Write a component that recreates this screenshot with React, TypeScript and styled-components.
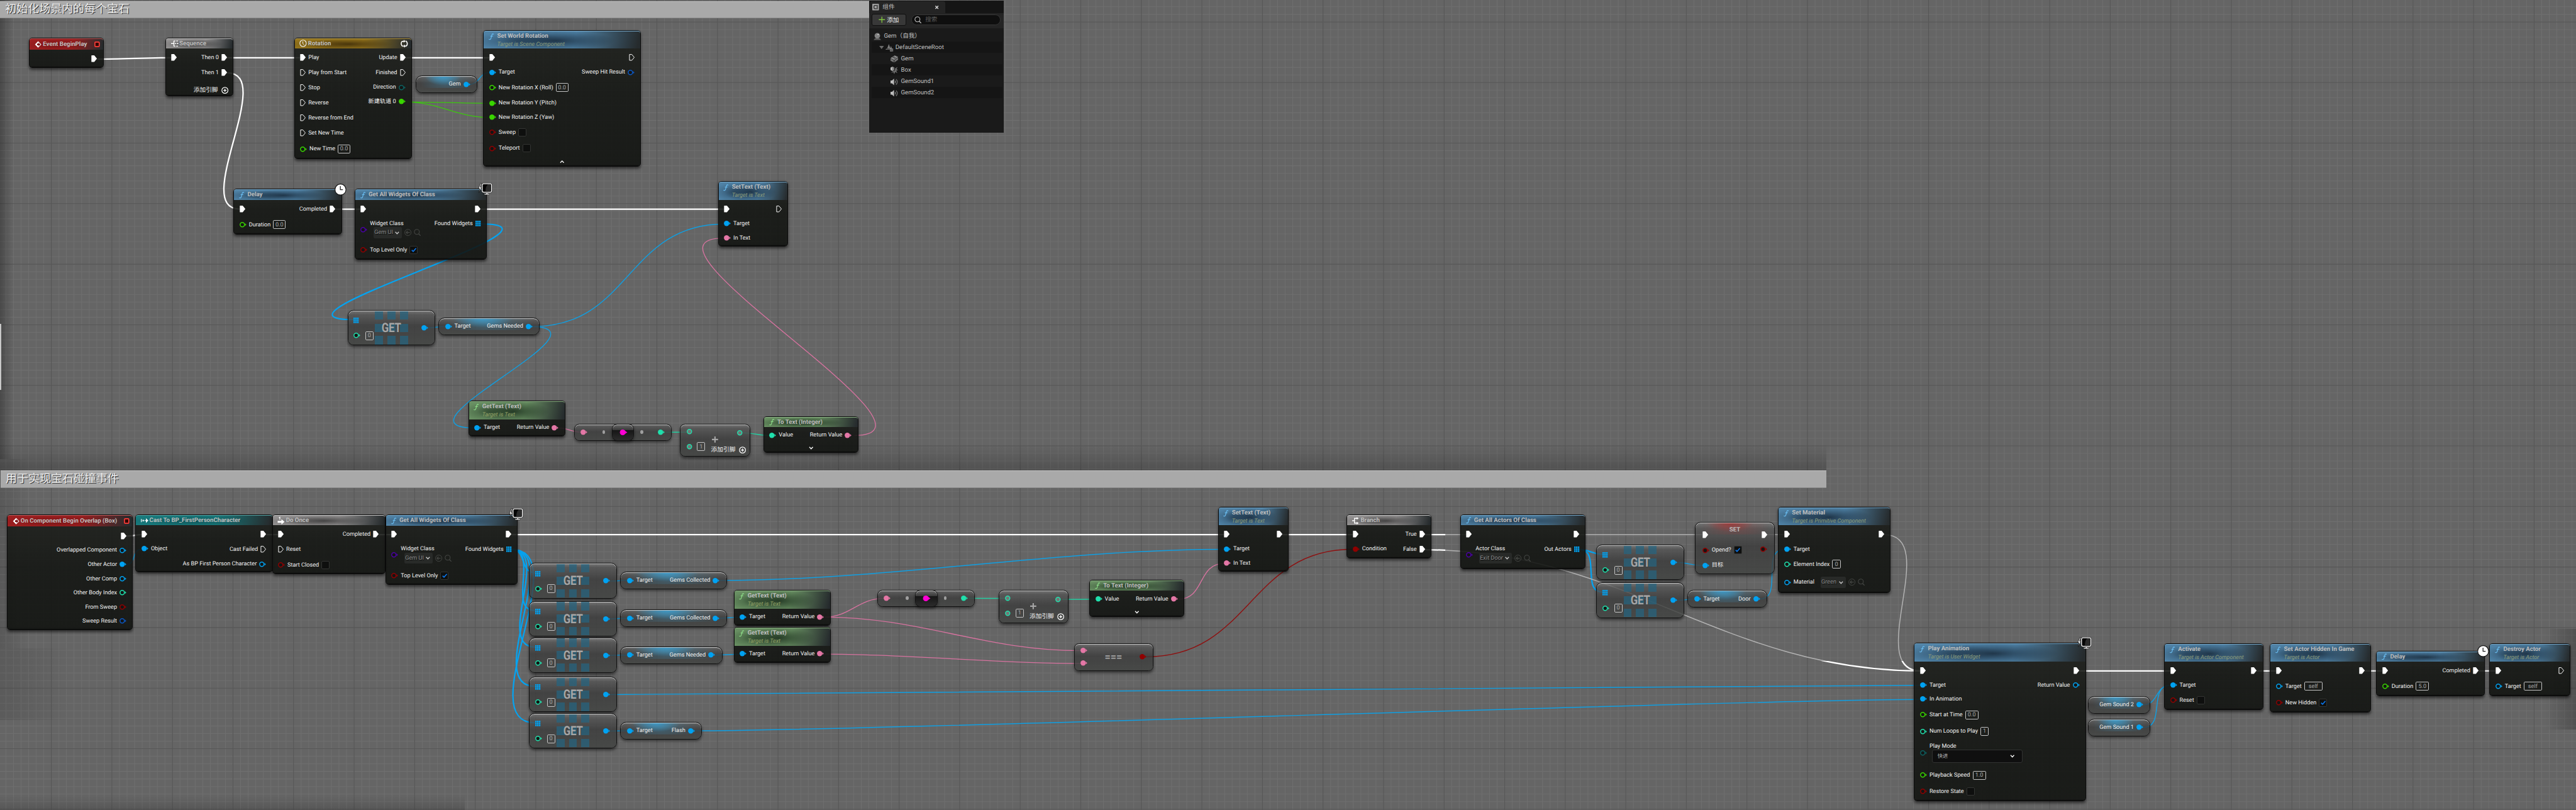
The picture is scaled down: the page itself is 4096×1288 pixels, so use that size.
import React from "react";
import styled, { createGlobalStyle, css } from "styled-components";

/* ---------- units ---------- */

const WORLD_W = 5445;
const WORLD_H = 1712;
const SCALE = 4096 / WORLD_W;
const u = (n: number) => `${+(n * SCALE).toFixed(3)}px`;

/* ---------- palette ---------- */

const C = {
  object: "#00a2f2",
  float: "#39d500",
  int: "#20e0ac",
  bool: "#900000",
  text: "#e477a6",
  struct: "#0b57c4",
  klass: "#4c00a8",
  enum: "#0d6060",
  name: "#ff00d4",
};

const Global = createGlobalStyle`
  html, body { margin: 0; padding: 0; background: #656565; }
  body { overflow: hidden; }
  * { box-sizing: border-box; }
`;

/* ---------- canvas ---------- */

const Canvas = styled.main`
  position: relative;
  width: 4096px;
  height: 1288px;
  overflow: hidden;
  background: #656565;
  color: #f2f2f2;
  font-family: Roboto, "Noto Sans CJK SC", sans-serif;
  font-size: ${u(12.2)};
  line-height: 1;
  white-space: nowrap;
  text-rendering: geometricPrecision;
`;

const Layer = styled.svg`
  position: absolute;
  inset: 0;
  width: 100%;
  height: 100%;
  display: block;
`;

const Shade = styled.div<{ $x: number; $y: number; $w: number; $h: number; $dir: string; $a: number }>`
  position: absolute;
  left: ${(p) => u(p.$x)};
  top: ${(p) => u(p.$y)};
  width: ${(p) => u(p.$w)};
  height: ${(p) => u(p.$h)};
  background: linear-gradient(${(p) => p.$dir}, rgba(0, 0, 0, ${(p) => p.$a}), transparent);
`;

type Box = { x: number; y: number; w: number; h: number };

const Placed = styled.div<{ $b: Box }>`
  position: absolute;
  left: ${(p) => u(p.$b.x)};
  top: ${(p) => u(p.$b.y)};
  width: ${(p) => u(p.$b.w)};
  height: ${(p) => u(p.$b.h)};
`;

const EdgeLine = styled(Placed)`
  background: #c8c8c8;
`;

const CommentBar = styled(Placed)`
  display: flex;
  align-items: center;
  padding-left: ${u(11)};
  background: #a9a9a9;
  border-top: ${u(1.4)} solid #c2c2c2;
  border-bottom: ${u(1)} solid #8c8c8c;
  font-size: ${u(23.9)};
  color: #ececec;
  text-shadow: ${u(1.6)} ${u(1.6)} 0 #3c3c3c;
`;

/* ---------- node shells ---------- */

type Tone = "func" | "pure" | "event" | "flow" | "cast" | "timeline";

const TONES: Record<Tone, { main: string; dark: string; soft: string; edge: string; sub: string; icon: string }> = {
  func: { main: "#4f82a6", dark: "rgba(22,38,54,.8)", soft: "rgba(22,38,54,.5)", edge: "#77a9cb", sub: "#8d9d7b", icon: "#6cc0f5" },
  pure: { main: "#688f62", dark: "rgba(24,42,26,.8)", soft: "rgba(24,42,26,.5)", edge: "#8bb184", sub: "#93a266", icon: "#8fe08a" },
  event: { main: "#9e1f20", dark: "rgba(95,12,14,.5)", soft: "rgba(95,12,14,.3)", edge: "#c06060", sub: "#aaa", icon: "#fff" },
  flow: { main: "#949292", dark: "rgba(38,38,38,.7)", soft: "rgba(38,38,38,.3)", edge: "#c8c8c8", sub: "#aaa", icon: "#fff" },
  cast: { main: "#187c7e", dark: "rgba(10,66,70,.7)", soft: "rgba(10,66,70,.3)", edge: "#58a5a6", sub: "#aaa", icon: "#fff" },
  timeline: { main: "#96761d", dark: "rgba(62,44,8,.85)", soft: "rgba(62,44,8,.4)", edge: "#bfa352", sub: "#aaa", icon: "#fff" },
};

const NodeBox = styled(Placed)`
  display: flex;
  flex-direction: column;
  border: ${u(1.8)} solid #0b0b0b;
  border-radius: ${u(6.5)};
  background: linear-gradient(rgba(28, 30, 26, 0.89), rgba(19, 21, 18, 0.89) 45%, rgba(16, 18, 15, 0.89));
  background-clip: padding-box;
  box-shadow: 0 ${u(3)} ${u(6)} rgba(0, 0, 0, 0.55), inset 0 ${u(-1.5)} 0 rgba(0, 0, 0, 0.45);
`;

const Header = styled.header<{ $tone: Tone; $h: number }>`
  display: flex;
  flex: none;
  height: ${(p) => u(p.$h - 1.8)};
  padding-left: ${u(10.5)};
  padding-right: ${u(6)};
  border-radius: ${u(5)} ${u(5)} 0 0;
  border-top: ${u(1.2)} solid ${(p) => TONES[p.$tone].edge};
  background: radial-gradient(ellipse 38% 58% at 46% 54%, ${(p) => TONES[p.$tone].dark}, transparent),
    radial-gradient(ellipse 30% 54% at 22% 56%, ${(p) => TONES[p.$tone].soft}, transparent),
    linear-gradient(102deg, ${(p) => TONES[p.$tone].main} 58%, #262b2d 98%);
`;

const IconSlot = styled.span<{ $h: number }>`
  display: flex;
  flex: none;
  align-items: center;
  width: ${u(17.6)};
  height: ${(p) => u(p.$h)};
`;

const CornerSlot = styled(IconSlot)`
  width: auto;
`;

const Titles = styled.div`
  display: flex;
  flex: 1;
  flex-direction: column;
`;

const Title = styled.div<{ $h: number }>`
  height: ${(p) => u(p.$h)};
  line-height: ${(p) => u(p.$h)};
  font-size: ${u(12.85)};
  font-weight: 700;
  color: #bfbfbf;
`;

const SubTitle = styled.div<{ $tone: Tone }>`
  height: ${u(14)};
  line-height: ${u(16)};
  font-size: ${u(12)};
  font-style: italic;
  color: ${(p) => TONES[p.$tone].sub};
`;

const Body = styled.div`
  position: relative;
  display: flex;
  flex: 1;
  justify-content: space-between;
`;

const PinColumn = styled.div<{ $side: "l" | "r" }>`
  display: flex;
  flex-direction: column;
  ${(p) =>
    p.$side === "l"
      ? css`
          align-items: flex-start;
          padding-left: ${u(11.3)};
        `
      : css`
          align-items: flex-end;
          padding-right: ${u(12.4)};
        `}
`;

const PIN_H = 10;

const PinRow = styled.div<{ $gap: number; $side: "l" | "r" }>`
  display: flex;
  flex: none;
  flex-direction: ${(p) => (p.$side === "l" ? "row" : "row-reverse")};
  align-items: center;
  gap: ${u(5.4)};
  height: ${u(PIN_H)};
  margin-top: ${(p) => u(p.$gap)};
`;

const Stack = styled.span`
  display: flex;
  flex-direction: column;
  padding-bottom: ${u(1.6)};
`;

const StackLabel = styled.span`
  height: ${u(15)};
  line-height: ${u(15)};
`;

const ValueBox = styled.span<{ $w: number; $pull?: number }>`
  display: flex;
  flex: none;
  align-items: center;
  justify-content: center;
  width: ${(p) => u(p.$w)};
  height: ${u(18.6)};
  margin-left: ${(p) => u(-(p.$pull ?? 0))};
  border: ${u(1.3)} solid #c4c4c4;
  border-radius: ${u(2.4)};
  color: #a9a9a9;
`;

const CheckBox = styled.span`
  display: flex;
  flex: none;
  align-items: center;
  justify-content: center;
  width: ${u(17.4)};
  height: ${u(17.4)};
  border: ${u(1)} solid #333432;
  border-radius: ${u(2.6)};
  background: #0e0f0e;
`;

const PickerRow = styled.span`
  display: flex;
  align-items: center;
  gap: ${u(5)};
  margin-left: ${u(7.2)};
  height: ${u(23.6)};
`;

const Picker = styled.span<{ $w: number }>`
  display: flex;
  align-items: center;
  justify-content: space-between;
  width: ${(p) => u(p.$w)};
  height: ${u(23.6)};
  padding: 0 ${u(5.6)} 0 ${u(2)};
  border-radius: ${u(3.4)};
  background: #282a28;
  color: #8f8f8f;
  text-shadow: ${u(1)} ${u(1)} 0 #000;
`;

const Select = styled.span`
  display: flex;
  align-items: center;
  justify-content: space-between;
  width: ${u(191.4)};
  height: ${u(27.4)};
  margin-left: ${u(5)};
  padding: 0 ${u(15)} 0 ${u(10.6)};
  border: ${u(1)} solid #313231;
  border-radius: ${u(4)};
  background: #0f0f0f;
  font-size: ${u(11)};
  color: #b5b5b5;
`;

const Expander = styled.div`
  position: absolute;
  left: 0;
  right: 0;
  bottom: ${u(6)};
  display: flex;
  justify-content: center;
`;

const AddPin = styled.div<{ $right: number; $bottom: number }>`
  position: absolute;
  right: ${(p) => u(p.$right)};
  bottom: ${(p) => u(p.$bottom)};
  display: flex;
  align-items: center;
  gap: ${u(7.6)};
  height: ${u(15)};
  font-size: ${u(12.9)};
`;

const Badge = styled.div<{ $x: number; $y: number }>`
  position: absolute;
  left: ${(p) => u(p.$x)};
  top: ${(p) => u(p.$y)};
  display: flex;
`;

/* ---------- compact nodes ---------- */

const SoftBox = styled(Placed)<{ $r: number; $glow?: string }>`
  display: flex;
  align-items: center;
  justify-content: space-between;
  border: ${u(1.6)} solid #121212;
  border-bottom-width: ${u(2.4)};
  border-radius: ${(p) => u(p.$r)};
  background: ${(p) =>
      p.$glow
        ? `radial-gradient(ellipse 30% ${u(20)} at 44% 0, ${p.$glow}, transparent) no-repeat, radial-gradient(ellipse 44% ${u(34)} at 50% ${u(10)}, ${p.$glow}55, transparent) 0 0 / 100% ${u(25)} no-repeat,`
        : ""}
    linear-gradient(rgba(122, 122, 122, 0.8), rgba(84, 84, 84, 0.8) 12%, rgba(58, 58, 58, 0.8) 46%, rgba(64, 66, 64, 0.82));
  background-clip: padding-box;
  box-shadow: 0 ${u(3)} ${u(6)} rgba(0, 0, 0, 0.5), inset 0 ${u(1.4)} ${u(0.8)} rgba(225, 225, 225, 0.75);
`;

const Pill = styled(SoftBox)`
  padding: 0 ${u(14)} 0 ${u(13)};
`;

const PillPin = styled.span<{ $rev?: boolean }>`
  display: flex;
  flex-direction: ${(p) => (p.$rev ? "row-reverse" : "row")};
  align-items: center;
  gap: ${u(5.2)};
  margin-left: ${(p) => (p.$rev ? "auto" : "0")};
`;

const GetBox = styled(SoftBox)`
  padding: 0 ${u(12.6)} 0 ${u(11.6)};
`;

const GetInputs = styled.div`
  display: flex;
  flex-direction: column;
  gap: ${u(13.4)};
  padding-top: ${u(1)};
`;

const GetInput = styled.div`
  display: flex;
  align-items: center;
  gap: ${u(10)};
  height: ${u(18.6)};
`;

const Tiles = styled.div`
  position: absolute;
  left: ${u(56)};
  top: ${u(1)};
  display: grid;
  grid-template: repeat(3, ${u(17.6)}) / repeat(3, ${u(17.2)});
  gap: ${u(8.7)} ${u(9.3)};
`;

const Tile = styled.i`
  background: rgba(38, 100, 128, 0.72);
`;

const GetCaption = styled.div`
  position: absolute;
  left: ${u(56)};
  top: 0;
  width: ${u(70)};
  height: ${u(72)};
  display: flex;
  align-items: center;
  justify-content: center;
  font-size: ${u(27)};
  font-weight: 700;
  color: #a6a6a6;
  transform: scaleX(0.82);
`;

const Knot = styled(Pill)`
  padding: 0 ${u(14)} 0 ${u(11.6)};
`;

const KnotDot = styled.i<{ $x: number }>`
  position: absolute;
  left: ${(p) => u(p.$x)};
  top: ${u(13)};
  width: ${u(5.6)};
  height: ${u(7)};
  border-radius: 50%;
  background: #a0a0a0;
`;

const KnotCore = styled(SoftBox)`
  justify-content: center;
  padding-left: ${u(2)};
  background: linear-gradient(#6a6a6a, #3a3a3a 34%, #161616 36%, #2c2c2c);
`;

const OpBox = styled(SoftBox)`
  align-items: stretch;
  padding: 0 ${u(13)} 0 ${u(13)};
`;

const OpColumn = styled.div<{ $top: number; $gap: number; $pull?: number }>`
  display: flex;
  flex-direction: column;
  gap: ${(p) => u(p.$gap)};
  padding-top: ${(p) => u(p.$top)};
  margin-right: ${(p) => u(-(p.$pull ?? 0))};
`;

const OpRow = styled.div`
  display: flex;
  align-items: center;
  gap: ${u(11)};
  height: ${u(12)};
`;

const Operator = styled.div<{ $x: number; $y: number; $size: number }>`
  position: absolute;
  left: ${(p) => u(p.$x)};
  top: ${(p) => u(p.$y)};
  display: flex;
  font-size: ${(p) => u(p.$size)};
  font-weight: 700;
  line-height: 1;
  color: #a6a6a6;
`;

const SetCaption = styled.div`
  position: absolute;
  left: 0;
  right: 0;
  top: ${u(9)};
  text-align: center;
  font-size: ${u(12.85)};
  font-weight: 700;
  color: #bfbfbf;
`;

const SetBody = styled(SoftBox)`
  align-items: flex-start;
  padding: 0 ${u(2.4)} 0 ${u(3.2)};
`;

/* ---------- icons ---------- */

const IconSvg = styled.svg`
  flex: none;
  overflow: visible;
`;

const Svg = ({ w, h, vb, children }: { w: number; h: number; vb?: string; children: React.ReactNode }) => (
  <IconSvg width={w * SCALE} height={h * SCALE} viewBox={vb ?? `0 0 ${w} ${h}`} fill="none">
    {children}
  </IconSvg>
);

const ExecGlyph = ({ open }: { open?: boolean }) => (
  <Svg w={12} h={14}>
    <path
      d="M1.2 .8H6.2L11.3 7 6.2 13.2H1.2Z"
      fill={open ? "none" : "#fff"}
      stroke="#fff"
      strokeWidth={open ? 1.3 : 1.4}
      strokeLinejoin="round"
    />
  </Svg>
);

const DataGlyph = ({ color, filled, bare }: { color: string; filled?: boolean; bare?: boolean }) => (
  <Svg w={14.6} h={11.4}>
    <circle cx="5.7" cy="5.7" r={filled ? 5.6 : 4.6} fill={filled ? color : bare ? "#757575" : "#141514"} stroke={filled ? "none" : color} strokeWidth="2" />
    {!bare && <path d="M11.4 2.8 14.4 5.7 11.4 8.6Z" fill={color} />}
  </Svg>
);

const ArrayGlyph = ({ color }: { color: string }) => (
  <Svg w={11} h={11.6}>
    {[0, 1, 2].map((r) =>
      [0, 1, 2].map((c) => <rect key={`${r}${c}`} x={c * 3.9} y={r * 4.1} width="3.2" height="3.4" fill={color} />)
    )}
  </Svg>
);

const Chevron = ({ up, w = 9 }: { up?: boolean; w?: number }) => (
  <Svg w={w} h={6} vb="0 0 9 6">
    <path d={up ? "M.8 5 4.5 1.2 8.2 5" : "M.8 1 4.5 4.9 8.2 1"} stroke={w > 9 ? "#fff" : "#c8c8c8"} strokeWidth="1.8" />
  </Svg>
);

const Tick = () => (
  <Svg w={11} h={9}>
    <path d="M1 4.8 4 7.8 10 1" stroke="#0a78f0" strokeWidth="2.1" />
  </Svg>
);

const UseIcon = () => (
  <Svg w={15} h={15}>
    <circle cx="7.5" cy="7.5" r="6.7" stroke="#444643" strokeWidth="1.3" />
    <path d="M11.5 7.5H4M7 4.2 3.8 7.5 7 10.8" stroke="#444643" strokeWidth="1.6" />
  </Svg>
);

const LensIcon = ({ color = "#444643", size = 15 }: { color?: string; size?: number }) => (
  <Svg w={size} h={size} vb="0 0 15 15">
    <circle cx="6.4" cy="6.4" r="5.3" stroke={color} strokeWidth="1.4" />
    <path d="M10.2 10.4 14.2 14.4" stroke={color} strokeWidth="1.7" />
  </Svg>
);

const PlusCircle = () => (
  <Svg w={15} h={15}>
    <circle cx="7.5" cy="7.5" r="6.4" stroke="#fff" strokeWidth="1.6" />
    <path d="M7.5 4.3V10.7M4.3 7.5H10.7" stroke="#fff" strokeWidth="1.8" />
  </Svg>
);

const FuncIcon = ({ color }: { color: string }) => (
  <Svg w={11} h={14}>
    <path d="M10.2 1.7C8.6.7 7.2 1.4 6.7 3.6L5 10.2C4.5 12.6 3 13.6 1 12.5" stroke={color} strokeWidth="1.5" strokeLinecap="round" />
    <path d="M3.4 5.9H9" stroke={color} strokeWidth="1.3" />
  </Svg>
);

const EventIcon = () => (
  <Svg w={15} h={15}>
    <path d="M7.5.6 14.2 7.5 7.5 14.4.8 7.5Z" fill="#fff" />
    <path d="M8.4 3.2 12.4 7.5 8.4 11.8V9.2H5.2V5.8H8.4Z" fill="#7a1517" />
  </Svg>
);

const SequenceIcon = () => (
  <Svg w={16} h={14}>
    <path d="M0 7H6M6 1V13M6 1.5H9M11 1.5H14.5M8 7H10.4M12 7H15.5M6 12.5H9M11 12.5H14.5" stroke="#fff" strokeWidth="1.9" />
  </Svg>
);

const BranchIcon = () => (
  <Svg w={15} h={16}>
    <path d="M0 8H5M11 3H5V13H11" stroke="#fff" strokeWidth="1.9" />
    <path d="M9.6.2 13.8 3 9.6 5.8ZM9.6 10.2 13.8 13 9.6 15.8Z" fill="#fff" />
  </Svg>
);

const CastIcon = () => (
  <Svg w={16} h={10}>
    <path d="M1 1.6V8.4M4 3.4V6.6M6 3.4V6.6M8 5H12" stroke="#fff" strokeWidth="1.5" />
    <path d="M10.6 0 15.8 5 10.6 10Z" fill="#fff" />
  </Svg>
);

const OnceIcon = () => (
  <Svg w={16} h={16}>
    <path d="M3.4 1.6 5.3.4V6" stroke="#fff" strokeWidth="1.5" />
    <path d="M.6 8.4H8.6V4.8L15.2 10.4 8.6 16V12.4H.6Z" fill="#fff" />
  </Svg>
);

const ClockOutline = () => (
  <Svg w={16} h={16}>
    <circle cx="7.8" cy="7.8" r="6.8" stroke="#f2f2f2" strokeWidth="1.5" />
    <path d="M7.4 3.6V8.2L10 11.2" stroke="#f2f2f2" strokeWidth="1.3" />
  </Svg>
);

const LoopIcon = () => (
  <Svg w={18} h={17}>
    <path d="M6.2 14.2A6.3 6.3 0 0 1 4.8 3.6L9.6 3.4M11.8 2.8A6.3 6.3 0 0 1 13.2 13.4L8.6 13.8" stroke="#fff" strokeWidth="2.2" />
    <path d="M8 .2 11.6 3.6 7.6 6.4ZM10 10.4 6.4 13.8 10.2 17Z" fill="#fff" />
  </Svg>
);

const DelegateIcon = () => (
  <Svg w={12} h={12}>
    <rect x="1.2" y="1.2" width="9.2" height="9.6" rx="1.6" fill="#330606" stroke="#ff3d38" strokeWidth="2.2" />
  </Svg>
);

const ClockBadge = () => (
  <Svg w={25} h={25}>
    <circle cx="12.5" cy="12.5" r="11.6" fill="#fff" stroke="#111" strokeWidth="1.5" />
    <path d="M12.2 5.2V12.8H17.6" stroke="#222" strokeWidth="1.7" />
  </Svg>
);

const MonitorBadge = () => (
  <Svg w={30} h={26}>
    <path d="M5.4.6 1 12H3.8L2 20.6 8 8.8H4.8L7.4 1Z" fill="#fff" stroke="#111" strokeWidth="1" />
    <rect x="8.6" y="1" width="20.6" height="19" rx="3.4" fill="#111" stroke="#111" strokeWidth="2" />
    <rect x="9" y="1.4" width="19.8" height="18" rx="3" fill="#050505" stroke="#fff" strokeWidth="1.7" />
    <path d="M16 18C16 10 18 5.6 21 2.6H27.6V18Z" fill="#2b2b2b" />
    <path d="M17.4 20.4H20.6V22.4H24.6V24.8H13.4V22.4H17.4Z" fill="#fff" stroke="#111" strokeWidth=".8" />
  </Svg>
);

/* ---------- pins ---------- */

type Kind = "exec" | "open" | "in" | "ring" | "array";

type PinSpec = {
  at: number;
  kind: Kind;
  color?: string;
  label?: string;
  value?: string;
  vw?: number;
  check?: boolean;
  picker?: [string, number];
  select?: string;
  inline?: boolean;
};

const Glyph = ({ kind, color = "#fff" }: { kind: Kind; color?: string }) =>
  kind === "exec" || kind === "open" ? (
    <ExecGlyph open={kind === "open"} />
  ) : kind === "array" ? (
    <ArrayGlyph color={color} />
  ) : (
    <DataGlyph color={color} filled={kind === "in"} />
  );

const PickerView = ({ name, w }: { name: string; w: number }) => (
  <PickerRow>
    <Picker $w={w}>
      {name}
      <Chevron />
    </Picker>
    <UseIcon />
    <LensIcon />
  </PickerRow>
);

const Pins = ({ side, pins, from }: { side: "l" | "r"; pins: PinSpec[]; from: number }) => {
  let prev = from;
  return (
    <PinColumn $side={side}>
      {pins.map((p) => {
        const gap = p.at - PIN_H / 2 - prev;
        prev = p.at + PIN_H / 2;
        const stacked = (p.picker && !p.inline) || p.select;
        return (
          <PinRow key={p.at} $gap={gap} $side={side}>
            <Glyph kind={p.kind} color={p.color} />
            {stacked ? (
              <Stack>
                <StackLabel>{p.label}</StackLabel>
                {p.picker && <PickerView name={p.picker[0]} w={p.picker[1]} />}
                {p.select && (
                  <Select>
                    {p.select}
                    <Chevron w={10} />
                  </Select>
                )}
              </Stack>
            ) : (
              p.label && <span>{p.label}</span>
            )}
            {p.value !== undefined && <ValueBox $w={p.vw ?? 26.4}>{p.value}</ValueBox>}
            {p.check !== undefined && <CheckBox>{p.check && <Tick />}</CheckBox>}
            {p.inline && p.picker && <PickerView name={p.picker[0]} w={p.picker[1]} />}
          </PinRow>
        );
      })}
    </PinColumn>
  );
};

/* ---------- blueprint nodes ---------- */

type NodeSpec = Box & {
  tone: Tone;
  title: string;
  sub?: string;
  icon?: React.ReactNode;
  corner?: React.ReactNode;
  l?: PinSpec[];
  r?: PinSpec[];
  badge?: "clock" | "monitor";
  fold?: "up" | "down";
  addPin?: boolean;
};

const BlueprintNode = ({ n }: { n: NodeSpec }) => {
  const head = n.sub ? 39.8 : n.tone === "event" ? 25.7 : 23.8;
  const line = n.sub ? 20 : head - 3;
  return (
    <NodeBox $b={n}>
      <Header $tone={n.tone} $h={head}>
        <IconSlot $h={n.sub ? 22 : line}>{n.icon ?? <FuncIcon color={TONES[n.tone].icon} />}</IconSlot>
        <Titles>
          <Title $h={line}>{n.title}</Title>
          {n.sub && <SubTitle $tone={n.tone}>{n.sub}</SubTitle>}
        </Titles>
        {n.corner && <CornerSlot $h={line}>{n.corner}</CornerSlot>}
      </Header>
      <Body>
        <Pins side="l" pins={n.l ?? []} from={n.y + head} />
        <Pins side="r" pins={n.r ?? []} from={n.y + head} />
        {n.fold && (
          <Expander>
            <Chevron up={n.fold === "up"} w={10} />
          </Expander>
        )}
        {n.addPin && (
          <AddPin $right={9} $bottom={3}>
            添加引脚
            <PlusCircle />
          </AddPin>
        )}
      </Body>
      {n.badge === "clock" && (
        <Badge $x={n.w - 17} $y={-13}>
          <ClockBadge />
        </Badge>
      )}
      {n.badge === "monitor" && (
        <Badge $x={n.w - 20} $y={-14}>
          <MonitorBadge />
        </Badge>
      )}
    </NodeBox>
  );
};

const exec = (at: number, label?: string): PinSpec => ({ at, kind: "exec", label });
const open = (at: number, label?: string): PinSpec => ({ at, kind: "open", label });
const dot = (at: number, color: string, label: string): PinSpec => ({ at, kind: "in", color, label });
const ring = (at: number, color: string, label: string, more: Partial<PinSpec> = {}): PinSpec => ({ at, kind: "ring", color, label, ...more });
const arr = (at: number, label: string): PinSpec => ({ at, kind: "array", color: C.object, label });

const getText = (x: number, y: number): NodeSpec => ({
  x, y, w: 205, h: 75.4, tone: "pure", title: "GetText (Text)", sub: "Target is Text",
  l: [dot(y + 57.1, C.object, "Target")],
  r: [dot(y + 57.1, C.text, "Return Value")],
});

const toText = (x: number, y: number): NodeSpec => ({
  x, y, w: 200.6, h: 78, tone: "pure", title: "To Text (Integer)", fold: "down",
  l: [dot(y + 41, C.int, "Value")],
  r: [dot(y + 41, C.text, "Return Value")],
});

const allWidgets = (x: number, y: number): NodeSpec => ({
  x, y, w: 280, h: 149, tone: "func", title: "Get All Widgets Of Class", badge: "monitor",
  l: [exec(y + 42.6), ring(y + 86.2, C.klass, "Widget Class", { picker: ["Gem UI", 60] }), ring(y + 129.6, C.bool, "Top Level Only", { check: true })],
  r: [exec(y + 42.6), arr(y + 74, "Found Widgets")],
});

const NODES: NodeSpec[] = [
  { x: 61.4, y: 79.3, w: 157.4, h: 64.7, tone: "event", title: "Event BeginPlay", icon: <EventIcon />, corner: <DelegateIcon />, r: [exec(125)] },
  {
    x: 349.6, y: 79.3, w: 144, h: 123.7, tone: "flow", title: "Sequence", icon: <SequenceIcon />, addPin: true,
    l: [exec(122)], r: [exec(122, "Then 0"), exec(154, "Then 1")],
  },
  {
    x: 621.6, y: 79.3, w: 249, h: 256.4, tone: "timeline", title: "Rotation", icon: <ClockOutline />, corner: <LoopIcon />,
    l: [exec(122, "Play"), open(154, "Play from Start"), open(185.8, "Stop"), open(217.9, "Reverse"), open(249.7, "Reverse from End"), open(281.8, "Set New Time"), ring(315.7, C.float, "New Time", { value: "0.0" })],
    r: [exec(122, "Update"), open(154, "Finished"), ring(185.2, C.enum, "Direction"), dot(215.4, C.float, "新建轨道 0")],
  },
  {
    x: 1021.4, y: 63.3, w: 333.6, h: 289, tone: "func", title: "Set World Rotation", sub: "Target is Scene Component", fold: "up",
    l: [exec(122), dot(153.3, C.object, "Target"), ring(185.7, C.float, "New Rotation X (Roll)", { value: "0.0" }), dot(218.3, C.float, "New Rotation Y (Pitch)"), dot(248.3, C.float, "New Rotation Z (Yaw)"), ring(280.2, C.bool, "Sweep", { check: false }), ring(314.2, C.bool, "Teleport", { check: false })],
    r: [open(122), ring(153.3, C.struct, "Sweep Hit Result")],
  },
  {
    x: 493.6, y: 399.3, w: 229, h: 96.4, tone: "func", title: "Delay", badge: "clock",
    l: [exec(442), ring(475.7, C.float, "Duration", { value: "0.0" })], r: [exec(442, "Completed")],
  },
  allWidgets(749.5, 399.4),
  {
    x: 1517.5, y: 383.3, w: 148.7, h: 137.2, tone: "func", title: "SetText (Text)", sub: "Target is Text",
    l: [exec(442), dot(473.4, C.object, "Target"), dot(503.2, C.text, "In Text")], r: [open(442)],
  },
  getText(989.8, 847.4),
  toText(1613.6, 879.4),
  {
    x: 14.2, y: 1087.3, w: 266.8, h: 244.4, tone: "event", title: "On Component Begin Overlap (Box)", icon: <EventIcon />, corner: <DelegateIcon />,
    r: [exec(1133), ring(1163.7, C.object, "Overlapped Component"), dot(1193.7, C.object, "Other Actor"), ring(1223.7, C.object, "Other Comp"), ring(1253.7, C.int, "Other Body Index"), ring(1283.7, C.bool, "From Sweep"), ring(1313.7, C.struct, "Sweep Result")],
  },
  {
    x: 286.4, y: 1087.3, w: 290, h: 123, tone: "cast", title: "Cast To BP_FirstPersonCharacter", icon: <CastIcon />,
    l: [exec(1130), dot(1160.7, C.object, "Object")],
    r: [exec(1130), open(1162, "Cast Failed"), ring(1192.7, C.object, "As BP First Person Character")],
  },
  {
    x: 575, y: 1087.3, w: 239.4, h: 127, tone: "flow", title: "Do Once", icon: <OnceIcon />,
    l: [exec(1130), open(1162, "Reset"), ring(1194.7, C.bool, "Start Closed", { check: false })], r: [exec(1130, "Completed")],
  },
  allWidgets(814.6, 1087.4),
  getText(1550.7, 1247.3),
  getText(1550.7, 1325.5),
  toText(2302.5, 1225.5),
  {
    x: 2574.4, y: 1071.3, w: 149.3, h: 137, tone: "func", title: "SetText (Text)", sub: "Target is Text",
    l: [exec(1130), dot(1160.9, C.object, "Target"), dot(1190.8, C.text, "In Text")], r: [exec(1130)],
  },
  {
    x: 2846.5, y: 1087.3, w: 179.2, h: 93, tone: "flow", title: "Branch", icon: <BranchIcon />,
    l: [exec(1130), dot(1160.8, C.bool, "Condition")], r: [exec(1130, "True"), exec(1162, "False")],
  },
  {
    x: 3086.4, y: 1087.3, w: 265.4, h: 115.5, tone: "func", title: "Get All Actors Of Class",
    l: [exec(1130), ring(1173.5, C.klass, "Actor Class", { picker: ["Exit Door", 69.6] })], r: [exec(1130), arr(1161.2, "Out Actors")],
  },
  {
    x: 3758.3, y: 1071.3, w: 237.6, h: 182.4, tone: "func", title: "Set Material", sub: "Target is Primitive Component",
    l: [exec(1130), dot(1161.3, C.object, "Target"), ring(1193.6, C.int, "Element Index", { value: "0", vw: 17.6 }), ring(1231.3, C.object, "Material", { picker: ["Green", 54], inline: true })],
    r: [exec(1130)],
  },
  {
    x: 4045.8, y: 1359.2, w: 363.4, h: 334.6, tone: "func", title: "Play Animation", sub: "Target is User Widget", badge: "monitor",
    l: [exec(1418), dot(1448.4, C.object, "Target"), dot(1478.4, C.object, "In Animation"), ring(1511.4, C.float, "Start at Time", { value: "0.0", vw: 28 }), ring(1546.4, C.int, "Num Loops to Play", { value: "1", vw: 17.6 }), ring(1592.7, C.enum, "Play Mode", { select: "快进" }), ring(1639.4, C.float, "Playback Speed", { value: "1.0", vw: 28 }), ring(1673.6, C.bool, "Restore State", { check: false })],
    r: [exec(1418), ring(1448.4, C.object, "Return Value")],
  },
  {
    x: 4574.4, y: 1359.3, w: 209.4, h: 141.4, tone: "func", title: "Activate", sub: "Target is Actor Component",
    l: [exec(1418), dot(1448.3, C.object, "Target"), ring(1480.7, C.bool, "Reset", { check: false })], r: [exec(1418)],
  },
  {
    x: 4798, y: 1359.3, w: 213.6, h: 146.4, tone: "func", title: "Set Actor Hidden In Game", sub: "Target is Actor",
    l: [exec(1418), ring(1451.4, C.object, "Target", { value: "self", vw: 38.6 }), ring(1485.8, C.bool, "New Hidden", { check: true })], r: [exec(1418)],
  },
  {
    x: 5022.6, y: 1375.3, w: 230, h: 96.4, tone: "func", title: "Delay", badge: "clock",
    l: [exec(1418), ring(1451.4, C.float, "Duration", { value: "5.0", vw: 28 })], r: [exec(1418, "Completed")],
  },
  {
    x: 5262, y: 1359.3, w: 171.6, h: 112.4, tone: "func", title: "Destroy Actor", sub: "Target is Actor",
    l: [exec(1418), ring(1451.4, C.object, "Target", { value: "self", vw: 38.6 })], r: [open(1418)],
  },
];

/* ---------- compact node views ---------- */

const GetNode = ({ x, y }: { x: number; y: number }) => (
  <GetBox $b={{ x, y, w: 185, h: 75 }} $r={12}>
    <Tiles>
      {Array.from({ length: 9 }, (_, i) => (
        <Tile key={i} />
      ))}
    </Tiles>
    <GetCaption>GET</GetCaption>
    <GetInputs>
      <GetInput>
        <ArrayGlyph color={C.object} />
      </GetInput>
      <GetInput>
        <DataGlyph color={C.int} />
        <ValueBox $w={17.4}>0</ValueBox>
      </GetInput>
    </GetInputs>
    <DataGlyph color={C.object} filled />
  </GetBox>
);

type PillSpec = { x: number; y: number; w: number; out: string; target?: boolean };

const PILLS: PillSpec[] = [
  { x: 878.2, y: 159.6, w: 130.8, out: "Gem" },
  { x: 926.4, y: 671.4, w: 214.6, out: "Gems Needed", target: true },
  { x: 1310.8, y: 1208.4, w: 225.8, out: "Gems Collected", target: true },
  { x: 1310.8, y: 1288.2, w: 225.8, out: "Gems Collected", target: true },
  { x: 1310.8, y: 1366.2, w: 216, out: "Gems Needed", target: true },
  { x: 1310.8, y: 1526.2, w: 173, out: "Flash", target: true },
  { x: 3566.3, y: 1247.4, w: 169.2, out: "Door", target: true },
  { x: 4414, y: 1471, w: 131.6, out: "Gem Sound 2" },
  { x: 4414, y: 1519, w: 131.6, out: "Gem Sound 1" },
];

const GETS = [
  [734.6, 655.4], [1118.6, 1190.4], [1118.6, 1270.4], [1118.6, 1347.4], [1118.6, 1430.4], [1118.6, 1507.4], [3374.4, 1151.3], [3374.4, 1231.3],
];

const Converter = ({ x, y }: { x: number; y: number }) => (
  <>
    <Knot $b={{ x, y, w: 206, h: 37 }} $r={11}>
      <DataGlyph color={C.text} filled />
      <KnotDot $x={58.5} />
      <KnotDot $x={138.5} />
      <DataGlyph color={C.int} filled />
    </Knot>
    <KnotCore $b={{ x: x + 79.6, y, w: 47, h: 37 }} $r={11}>
      <Svg w={17} h={12}>
        <circle cx="6.8" cy="6" r="6" fill={C.name} />
        <path d="M10 1.6 16.6 6 10 10.4Z" fill={C.name} />
      </Svg>
    </KnotCore>
  </>
);

const AddNode = ({ x, y }: { x: number; y: number }) => (
  <OpBox $b={{ x, y, w: 148.4, h: 70 }} $r={11}>
    <OpColumn $top={10} $gap={19.6}>
      <OpRow>
        <DataGlyph color={C.int} bare />
      </OpRow>
      <OpRow>
        <DataGlyph color={C.int} bare />
        <ValueBox $w={17.4} $pull={4}>1</ValueBox>
      </OpRow>
    </OpColumn>
    <OpColumn $top={12} $gap={0} $pull={1}>
      <OpRow>
        <DataGlyph color={C.int} bare />
      </OpRow>
    </OpColumn>
    <Operator $x={66} $y={26.4} $size={13}>
      <Svg w={13} h={13}>
        <path d="M6.5 0V13M0 6.5H13" stroke="#a6a6a6" strokeWidth="2.8" />
      </Svg>
    </Operator>
    <AddPin $right={7.4} $bottom={5}>
      添加引脚
      <PlusCircle />
    </AddPin>
  </OpBox>
);

/* ---------- wires ---------- */

type Wire = { c: string; w: number; p: [number, number, number, number]; t?: number };

const wirePath = ({ p: [x1, y1, x2, y2], t }: Wire) => {
  const k = t ?? (Math.min(Math.abs(x2 - x1), 1000) + Math.min(Math.abs(y2 - y1), 1000)) / 3;
  return `M${x1} ${y1}C${x1 + k} ${y1} ${x2 - k} ${y2} ${x2} ${y2}`;
};

const E = (...p: [number, number, number, number]): Wire => ({ c: "#ffffff", w: 3, p });
const O = (...p: [number, number, number, number]): Wire => ({ c: "#109fe2", w: 1.9, p });
const A = (...p: [number, number, number, number]): Wire => ({ c: "#05a3f0", w: 3, p });
const T = (...p: [number, number, number, number]): Wire => ({ c: "#d873a0", w: 1.8, p });
const I = (...p: [number, number, number, number]): Wire => ({ c: "#24cfa2", w: 1.9, p });
const F = (...p: [number, number, number, number]): Wire => ({ c: "#3cc80e", w: 1.8, p });

const WIRES: Wire[] = [
  E(205, 125, 364, 122), E(480, 122, 635, 122), E(480, 154, 507, 442), E(857, 122, 1035, 122), E(709, 442, 763, 442), E(1017, 442, 1532, 442),
  E(267, 1133, 300, 1130), E(563, 1130, 589, 1130), E(801, 1130, 828, 1130), { ...E(1081, 1130, 2588, 1130), w: 3.2 }, E(2710, 1130, 2860, 1130),
  E(4395, 1418, 4588, 1418), E(4769, 1418, 4812, 1418), E(4998, 1418, 5036, 1418), E(5239, 1418, 5276, 1418),
  O(992, 178.3, 1035, 153.3), O(904, 693, 941, 690), O(1126, 690.2, 1531, 473.5), { ...O(1120, 690.2, 1003, 904.5), t: 190 },
  O(266, 1193.7, 300, 1160.7), O(1289, 1228, 1326, 1226.8), O(1289, 1308, 1326, 1306.6), O(1289, 1385, 1326, 1384.6), O(1289, 1545, 1326, 1544.6),
  O(1521, 1226.8, 2588, 1161), O(1521, 1306.6, 1564, 1304.4), O(1511, 1384.6, 1564, 1382.6), O(1289, 1468, 4060, 1448.4), O(1468, 1544.6, 4060, 1478.4),
  O(3545, 1189, 3598, 1195.3), O(3545, 1269, 3581, 1266), O(3719, 1266, 3772, 1161.3), O(4530, 1489.7, 4588, 1448.3), O(4530, 1537.7, 4588, 1448.3),
  { ...A(1016, 473.5, 748, 675.5), t: 230 },
  A(1081, 1161.3, 1131, 1210.6), A(1081, 1161.3, 1131, 1290.6), A(1081, 1161.3, 1131, 1367.6), A(1081, 1161.3, 1131, 1450.6), A(1081, 1161.3, 1131, 1527.6),
  A(3338, 1161.3, 3388, 1171.6), A(3338, 1161.3, 3388, 1251.6),
  F(857, 215.4, 1035, 218.3), F(857, 215.4, 1035, 248.3),
  T(1181, 904.5, 1228, 913.4), { ...T(1806, 920.4, 1530, 503.2), t: 228 }, T(1742, 1304.4, 1869, 1264.6), T(1742, 1304.4, 2284, 1375.3),
  T(1742, 1382.6, 2284, 1402.3), T(2490, 1266.5, 2588, 1190.8),
  I(1406, 913.4, 1452, 913.4), I(1571, 915, 1628, 920.4), I(2047, 1264.6, 2125, 1264.8), I(2245, 1266.8, 2317, 1266.5),
  { c: "#8e1010", w: 1.9, p: [2423, 1388.3, 2860, 1160.8] },
];

const FADING: Wire[] = [E(3012, 1130, 3100, 1130), E(3012, 1162, 4060, 1418), E(3338, 1130, 3598, 1130), E(3735, 1130, 3772, 1130), E(3983, 1130, 4060, 1418)];

const gridPath = (major: boolean) => {
  const out: string[] = [];
  for (let i = -7; i < 336; i++) if ((i % 8 === 0) === major) out.push(`M${108.5 + i * 16} 0V${WORLD_H}`);
  for (let j = -3; j < 106; j++) if ((j % 8 === 0) === major) out.push(`M0 ${46.4 + j * 16}H${WORLD_W}`);
  return out.join("");
};

const Background = () => (
  <Layer viewBox={`0 0 ${WORLD_W} ${WORLD_H}`} preserveAspectRatio="none">
    <path d={gridPath(false)} stroke="#6f6f6f" strokeWidth="1.4" />
    <path d={gridPath(true)} stroke="#575757" strokeWidth="1.4" />
  </Layer>
);

const Wires = () => (
  <Layer viewBox={`0 0 ${WORLD_W} ${WORLD_H}`} preserveAspectRatio="none" fill="none">
    <clipPath id="faded">
      <path d="M3055 0H5445V1397H3055Z" />
    </clipPath>
    <clipPath id="bright">
      <path d={`M0 0H3055V1397H${WORLD_W}V${WORLD_H}H0Z`} />
    </clipPath>
    {WIRES.map((w, i) => (
      <path key={i} d={wirePath(w)} stroke={w.c} strokeWidth={w.w} />
    ))}
    <g clipPath="url(#faded)">
      {FADING.map((w, i) => (
        <path key={i} d={wirePath(w)} stroke="#b2b2b2" strokeWidth="2" />
      ))}
    </g>
    <g clipPath="url(#bright)">
      {FADING.map((w, i) => (
        <path key={i} d={wirePath(w)} stroke="#fff" strokeWidth="3" />
      ))}
    </g>
  </Layer>
);

/* ---------- components panel ---------- */

const Panel = styled.aside<{ $b: Box }>`
  position: absolute;
  left: ${(p) => u(p.$b.x)};
  top: ${(p) => u(p.$b.y)};
  width: ${(p) => u(p.$b.w)};
  height: ${(p) => u(p.$b.h)};
  display: flex;
  flex-direction: column;
  background: #1a1a1a;
  color: #c0c0c0;
  font-size: ${u(12.8)};
`;

const TabBar = styled.div`
  display: flex;
  height: ${u(27)};
  padding: ${u(2)} 0 0 ${u(1.6)};
  background: #151515;
`;

const Tab = styled.div`
  display: flex;
  align-items: center;
  width: ${u(159.6)};
  padding: 0 ${u(14)} 0 ${u(5.4)};
  gap: ${u(7.6)};
  border-radius: ${u(4)} ${u(4)} 0 0;
  background: #242424;

  svg:last-child {
    margin-left: auto;
  }
`;

const Toolbar = styled.div`
  display: flex;
  align-items: center;
  gap: ${u(11.4)};
  height: ${u(32)};
  padding: 0 ${u(5.4)} ${u(4)} ${u(5)};
  background: #242424;
`;

const AddButton = styled.button`
  display: flex;
  align-items: center;
  justify-content: center;
  gap: ${u(4)};
  width: ${u(73)};
  height: ${u(25)};
  padding: 0;
  border: ${u(1.2)} solid #0f0f0f;
  border-radius: ${u(4)};
  background: #383838;
  color: #e8e8e8;
  font: inherit;
`;

const Search = styled.div`
  display: flex;
  flex: 1;
  align-items: center;
  gap: ${u(8)};
  height: ${u(22)};
  padding-left: ${u(5)};
  border: ${u(1.2)} solid #363636;
  border-radius: ${u(11)};
  background: #0f0f0f;
  color: #5c5c5c;
`;

const Tree = styled.div`
  display: flex;
  flex-direction: column;
  padding: ${u(4)} ${u(2)} 0 ${u(5)};
`;

const TreeRow = styled.div<{ $indent: number; $alt?: boolean; $gap: number }>`
  display: flex;
  align-items: center;
  gap: ${(p) => u(p.$gap)};
  height: ${u(24)};
  padding-top: ${u(1.6)};
  padding-left: ${(p) => u(p.$indent)};
  background: ${(p) => (p.$alt ? "#151515" : "transparent")};
`;

const TabIcon = () => (
  <Svg w={14} h={14}>
    <rect width="14" height="14" rx="1" fill="#a0a0a0" />
    <path d="M9 3.6H5.4Q3.6 3.6 3.6 5.4V8.6Q3.6 10.4 5.4 10.4H9M10.4 2.4V11.6" stroke="#242424" strokeWidth="1.7" />
  </Svg>
);

const CloseIcon = () => (
  <Svg w={7} h={7}>
    <path d="M.5.5 6.5 6.5M6.5.5.5 6.5" stroke="#d0d0d0" strokeWidth="1.9" />
  </Svg>
);

const PlusGreen = () => (
  <Svg w={14} h={14}>
    <path d="M7 .5V13.5M.5 7H13.5" stroke="#7fc241" strokeWidth="1.8" />
  </Svg>
);

const SphereIcon = () => (
  <Svg w={16} h={16}>
    <circle cx="8" cy="6.4" r="5.9" fill="#828282" />
    <circle cx="9.6" cy="3.8" r="1.2" fill="#e6e6e6" />
    <path d="M0 15.4 3 12H13L16 15.4Z" fill="#5e5e5e" />
  </Svg>
);

const RootIcon = () => (
  <Svg w={17} h={16}>
    <path d="M7 0 11 11H3ZM11.5 4 14 10H10ZM0 12H9V10H1.6Z" fill="#7c7c7c" />
    <rect x="9.6" y="9.4" width="6.6" height="6.2" fill="#9a9a9a" />
    <path d="M13.4 11H11.4V14H13.4M15 9.8V15.4" stroke="#151515" strokeWidth="1" />
  </Svg>
);

const MeshIcon = () => (
  <Svg w={16} h={15}>
    <path d="M0 6 9 .4 16 3.6 7.4 9.6Z" fill="#a8a8a8" />
    <path d="M0 7 7 10.4V15L0 11.4ZM8.2 10.4 16 5V9.4L8.2 15Z" fill="#727272" />
    <path d="M3 6 10 2M6 7.6 13 3.4M5 3.4 11 6.6" stroke="#1a1a1a" strokeWidth="1" />
  </Svg>
);

const BoxIcon = () => (
  <Svg w={16} h={16}>
    <path d="M0 2 4 0 8 2V7L4 9.4 0 7Z" fill="#b8b8b8" />
    <path d="M4 0 8 2V7L4 9.4Z" fill="#7e7e7e" />
    <path d="M9.6 3.6 15 .6 12.6 5.4 16 7 12 8.8 14.6 13.6 9.6 11 8 16 6 11.6 1 13 4.4 10.4 9.4 8Z" fill="#6c6c6c" />
  </Svg>
);

const SoundIcon = () => (
  <Svg w={16} h={14}>
    <path d="M0 4H3.2L7.4 0V14L3.2 10H0Z" fill="#bdbdbd" />
    <path d="M9.4 4.6A3.4 3.4 0 0 1 9.4 9.4" stroke="#8a8a8a" strokeWidth="1.4" />
    <path d="M11.6 1.2A7.6 7.6 0 0 1 11.6 12.8" stroke="#6e6e6e" strokeWidth="1.8" />
  </Svg>
);

const Caret = () => (
  <Svg w={10} h={7}>
    <path d="M0 0H10L5 6.6Z" fill="#6a6a6a" />
  </Svg>
);

const ComponentsPanel = () => (
  <Panel $b={{ x: 1837, y: 1, w: 284, h: 279 }}>
    <TabBar>
      <Tab>
        <TabIcon />
        组件
        <CloseIcon />
      </Tab>
    </TabBar>
    <Toolbar>
      <AddButton>
        <PlusGreen />
        添加
      </AddButton>
      <Search>
        <LensIcon color="#c4c4c4" />
        搜索
      </Search>
    </Toolbar>
    <Tree>
      <TreeRow $indent={4} $gap={6.4}>
        <SphereIcon />
        Gem（自我）
      </TreeRow>
      <TreeRow $indent={17} $gap={3.4} $alt>
        <Caret />
        <RootIcon />
        <span>DefaultSceneRoot</span>
      </TreeRow>
      <TreeRow $indent={40} $gap={6.4}>
        <MeshIcon />
        Gem
      </TreeRow>
      <TreeRow $indent={40} $gap={6.4} $alt>
        <BoxIcon />
        Box
      </TreeRow>
      <TreeRow $indent={40} $gap={6.4}>
        <SoundIcon />
        GemSound1
      </TreeRow>
      <TreeRow $indent={40} $gap={6.4} $alt>
        <SoundIcon />
        GemSound2
      </TreeRow>
    </Tree>
  </Panel>
);

/* ---------- page ---------- */

const SetNode = () => (
  <SetBody $b={{ x: 3582.4, y: 1103.3, w: 169.2, h: 110.4 }} $r={12} $glow="#9c3a3a">
    <SetCaption>SET</SetCaption>
    <Pins
      side="l"
      from={1104.9}
      pins={[exec(1130), ring(1163.2, C.bool, "Opend?", { check: true }), dot(1195.4, C.object, "目标")]}
    />
    <Pins side="r" from={1104.9} pins={[exec(1130), ring(1161.6, C.bool, "")]} />
  </SetBody>
);

export default function App() {
  return (
    <Canvas>
      <Global />
      <Background />
      <Shade $x={0} $y={0} $w={28} $h={970} $dir="to right" $a={0.28} />
      <Shade $x={0} $y={970} $w={60} $h={400} $dir="to right" $a={0.12} />
      <Shade $x={0} $y={1370} $w={150} $h={152} $dir="to right" $a={0.1} />
      <Shade $x={5380} $y={1330} $w={65} $h={212} $dir="to left" $a={0.2} />
      <Shade $x={0} $y={938} $w={3860} $h={56} $dir="to top" $a={0.2} />
      <Shade $x={0} $y={1680} $w={983} $h={32} $dir="to top" $a={0.14} />
      <EdgeLine $b={{ x: 0, y: 684, w: 2, h: 140 }} />
      <CommentBar $b={{ x: 0, y: 2, w: 1837, h: 37 }}>初始化场景内的每个宝石</CommentBar>
      <CommentBar $b={{ x: 1, y: 994, w: 3859, h: 37 }}>用于实现宝石碰撞事件</CommentBar>
      <Wires />
      {NODES.map((n, i) => (
        <BlueprintNode key={i} n={n} />
      ))}
      {GETS.map(([x, y]) => (
        <GetNode key={`${x}-${y}`} x={x} y={y} />
      ))}
      {PILLS.map((p) => (
        <Pill key={`${p.x}-${p.y}`} $b={{ x: p.x, y: p.y, w: p.w, h: 37.2 }} $r={13} $glow="#3d9ac8">
          {p.target && (
            <PillPin>
              <DataGlyph color={C.object} filled />
              Target
            </PillPin>
          )}
          <PillPin $rev>
            <DataGlyph color={C.object} filled />
            {p.out}
          </PillPin>
        </Pill>
      ))}
      <Converter x={1214} y={895.4} />
      <Converter x={1855} y={1246.4} />
      <AddNode x={1437.4} y={895.4} />
      <AddNode x={2110.6} y={1247.3} />
      <OpBox $b={{ x: 2270, y: 1359.3, w: 167.8, h: 59 }} $r={10}>
        <OpColumn $top={8.4} $gap={15}>
          <OpRow>
            <DataGlyph color={C.text} filled />
          </OpRow>
          <OpRow>
            <DataGlyph color={C.text} filled />
          </OpRow>
        </OpColumn>
        <Operator $x={63.6} $y={18.4} $size={21.6}>
          ===
        </Operator>
        <OpColumn $top={21.4} $gap={0}>
          <OpRow>
            <DataGlyph color={C.bool} filled />
          </OpRow>
        </OpColumn>
      </OpBox>
      <SetNode />
      <ComponentsPanel />
    </Canvas>
  );
}
